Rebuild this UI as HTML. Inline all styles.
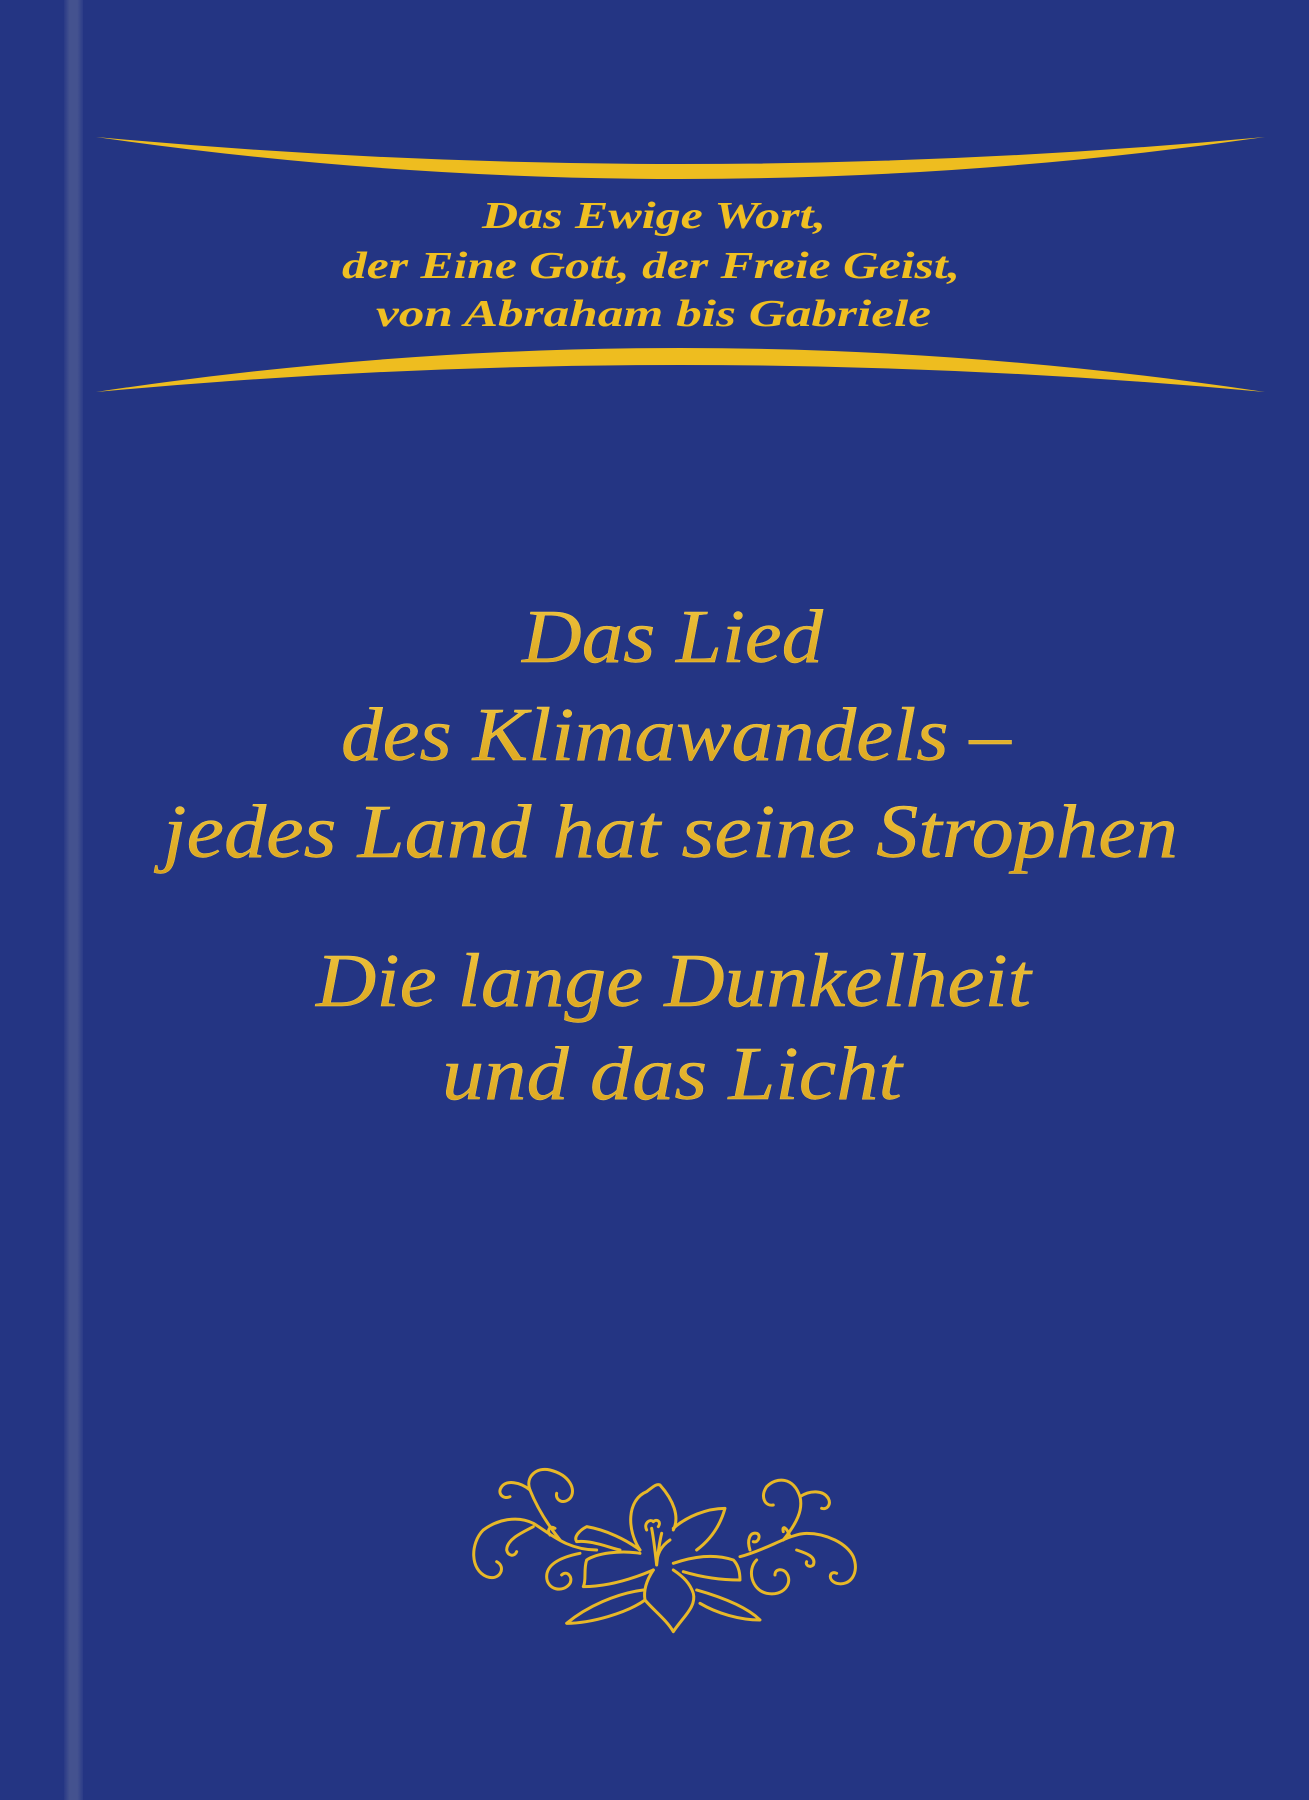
<!DOCTYPE html>
<html><head><meta charset="utf-8"><style>
html,body{margin:0;padding:0;background:#243583;}
body{width:1309px;height:1800px;overflow:hidden;position:relative;}
svg{position:absolute;left:0;top:0;}
</style></head><body>
<svg width="1309" height="1800" viewBox="0 0 1309 1800" xmlns="http://www.w3.org/2000/svg">
<defs>
<linearGradient id="sp" x1="0" x2="1" y1="0" y2="0">
<stop offset="0" stop-color="#2a3a86"/><stop offset="0.3" stop-color="#44528f"/><stop offset="0.7" stop-color="#44528f"/><stop offset="1" stop-color="#2c3c88"/>
</linearGradient>
<linearGradient id="gd" x1="0" x2="0" y1="0" y2="1">
<stop offset="0" stop-color="#f0c640"/><stop offset="1" stop-color="#d9a21c"/>
</linearGradient>
</defs>
<rect width="1309" height="1800" fill="#243583"/>
<rect x="64" y="0" width="19" height="1800" fill="url(#sp)"/>
<path d="M96,137 Q680,191 1265,137 Q680,221 96,137 Z" fill="#eebd1f"/>
<path d="M96,392 Q680,304 1265,392 Q680,338 96,392 Z" fill="#eebd1f"/>
<g font-family="'Liberation Serif',serif" font-weight="bold" font-style="italic" font-size="38" fill="#f0bf22">
<text x="482" y="228" textLength="344" lengthAdjust="spacingAndGlyphs">Das Ewige Wort,</text>
<text x="342" y="278" textLength="618" lengthAdjust="spacingAndGlyphs">der Eine Gott, der Freie Geist,</text>
<text x="376" y="326" textLength="555" lengthAdjust="spacingAndGlyphs">von Abraham bis Gabriele</text>
</g>
<g font-family="'Liberation Serif',serif" font-style="italic" font-size="76" fill="url(#gd)" stroke="#f3cc4a" stroke-width="0.4">
<text x="522" y="662" textLength="301" lengthAdjust="spacingAndGlyphs">Das Lied</text>
<text x="341" y="760" textLength="670" lengthAdjust="spacingAndGlyphs">des Klimawandels –</text>
<text x="163" y="857" textLength="1015" lengthAdjust="spacingAndGlyphs">jedes Land hat seine Strophen</text>
<text x="316" y="1006" textLength="715" lengthAdjust="spacingAndGlyphs">Die lange Dunkelheit</text>
<text x="442" y="1099" textLength="460" lengthAdjust="spacingAndGlyphs">und das Licht</text>
</g>
<g transform="translate(440,1450) scale(0.3333)" fill="none" stroke="#e8b828" stroke-width="9" stroke-linecap="round" stroke-linejoin="round">
<path d="M600,300 C560,240 560,150 620,125 C640,110 650,100 660,105 C700,150 720,200 700,240"/>
<path d="M700,235 C740,200 800,175 855,175 C840,230 810,270 770,300"/>
<path d="M600,300 C560,270 500,240 440,230 C420,240 400,260 410,275 C450,270 500,290 540,300"/>
<path d="M600,310 C540,300 470,310 440,330 C430,360 440,390 430,410 C500,410 570,390 640,360"/>
<path d="M640,360 C620,390 610,420 615,450 C640,480 680,510 700,545 C730,500 770,470 760,430 C750,400 730,380 700,360"/>
<path d="M700,340 C760,320 820,310 880,330 C900,350 900,380 900,390 C840,390 780,380 730,365"/>
<path d="M610,420 C530,430 440,470 380,520 C450,520 560,490 615,450"/>
<path d="M770,420 C840,440 920,470 960,510 C900,510 830,490 780,460"/>
<path d="M650,345 C645,300 640,260 635,235 M650,345 C655,300 660,270 665,250 M650,345 C650,300 675,280 690,270"/>
<path d="M620,240 C610,220 630,205 640,215 M640,215 C650,205 665,215 655,230"/>
<path d="M470,300 C380,300 330,250 280,220 C230,195 170,210 130,240 C90,280 90,360 140,380 C180,395 200,350 170,335"/>
<path d="M360,270 C320,220 290,170 270,120 C255,80 290,50 330,60 C390,75 410,120 390,145 C370,165 345,150 350,130"/>
<path d="M270,120 C240,95 200,90 185,110 C170,130 190,150 210,140"/>
<path d="M280,230 C240,250 200,270 200,300 C205,320 225,320 230,305"/>
<path d="M330,255 C320,240 330,225 345,235"/>
<path d="M420,310 C370,320 320,340 320,380 C320,420 370,430 390,400 C400,380 380,360 365,375"/>
<path d="M900,320 C980,300 1050,250 1100,250 C1160,250 1220,280 1240,320 C1260,370 1230,410 1190,400 C1160,390 1170,360 1190,370"/>
<path d="M1030,270 C1070,220 1090,180 1080,140 C1060,80 1010,80 980,110 C960,140 975,170 1000,165"/>
<path d="M1080,140 C1110,120 1150,120 1165,145 C1175,165 1160,180 1145,175"/>
<path d="M1050,260 C1040,230 1025,225 1030,245"/>
<path d="M930,300 C920,270 930,245 950,250 C965,255 955,280 940,275"/>
<path d="M950,330 C920,360 935,420 980,430 C1030,440 1060,400 1040,370 C1030,355 1005,355 1005,375"/>
<path d="M1070,300 C1100,310 1130,320 1120,345 C1110,355 1095,345 1100,335"/>
</g>
</svg>
</body></html>
